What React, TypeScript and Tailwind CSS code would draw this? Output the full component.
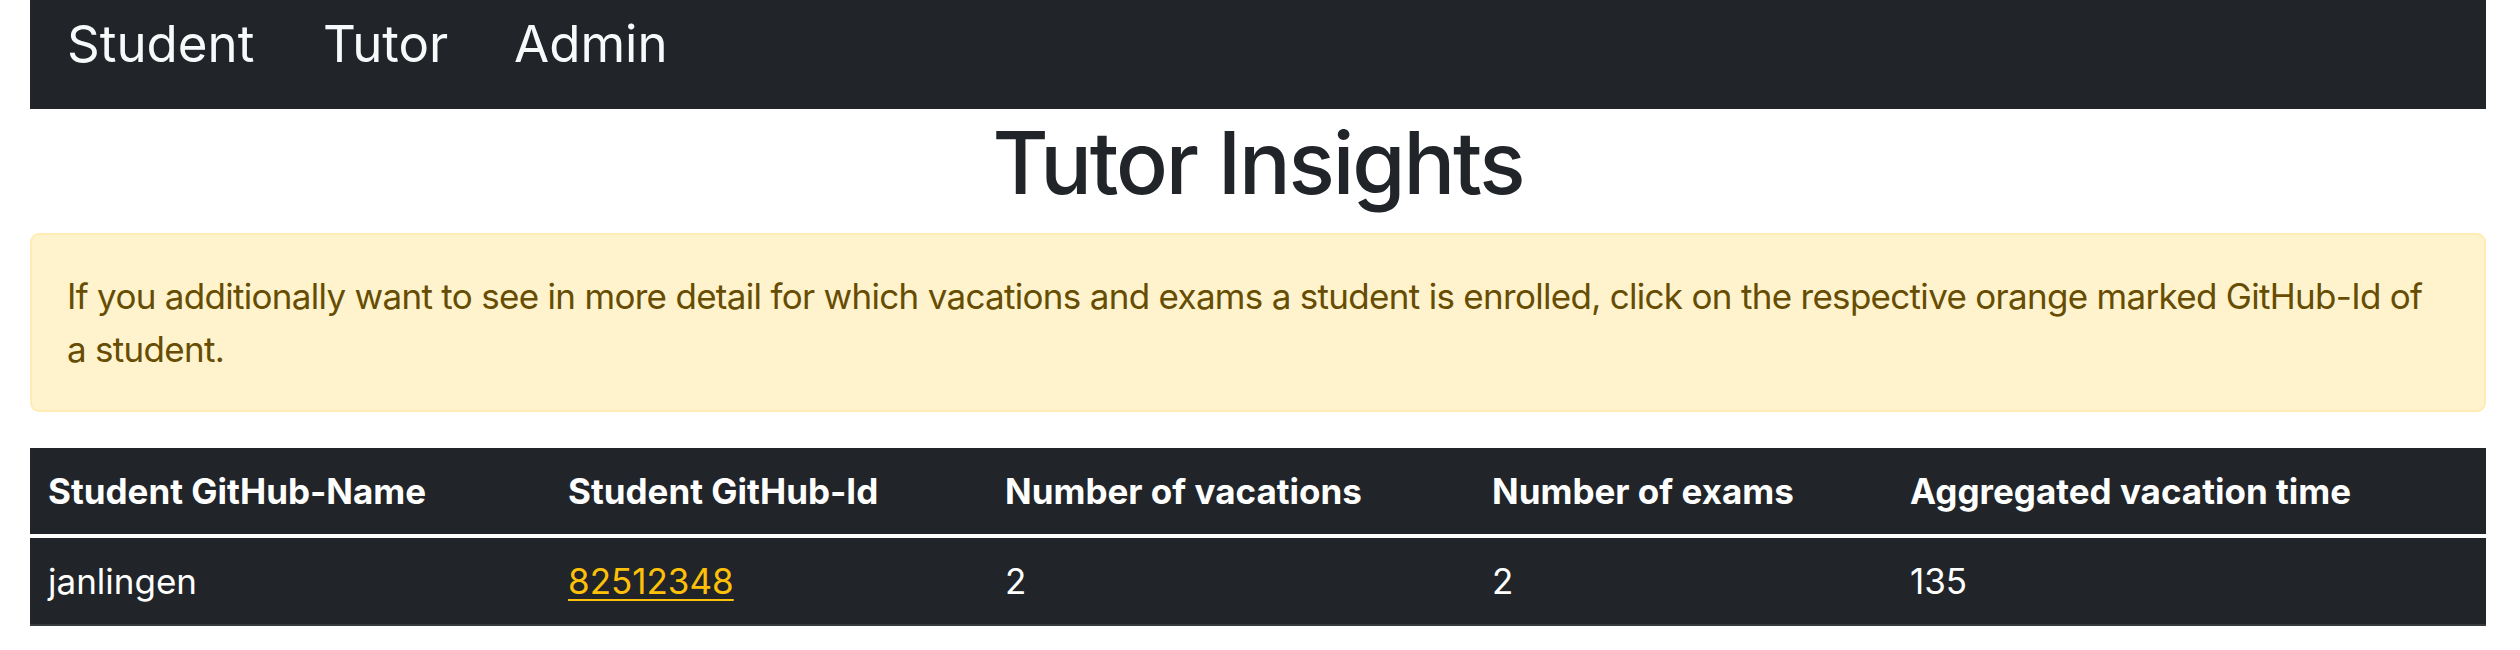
import React from "react";

const cols = [
  { label: "Student GitHub-Name", w: "w-[520px]" },
  { label: "Student GitHub-Id", w: "w-[437px]" },
  { label: "Number of vacations", w: "w-[487px]" },
  { label: "Number of exams", w: "w-[418px]" },
  { label: "Aggregated vacation time", w: "w-[594px]" },
];

export default function App() {
  return (
    <div className="[font-family:Inter,'Noto_Sans',sans-serif] bg-white min-h-[650px] text-[#212529]">
      <div className="ml-[30px] mr-[34px]">
        <nav className="h-[109px] bg-[#212529] pl-[37px]">
          <ul className="flex pt-[13px] text-[51px] leading-[1.21] text-[#f8f9fa]">
            <li className="w-[256px]">
              <a href="#">Student</a>
            </li>
            <li className="w-[191px]">
              <a href="#">Tutor</a>
            </li>
            <li>
              <a href="#">Admin</a>
            </li>
          </ul>
        </nav>

        <h1 className="mt-[3px] mb-[18px] text-center text-[86px] leading-[1.2] font-medium tracking-[-0.025em] text-[#212529]">
          Tutor Insights
        </h1>

        <div className="rounded-[9px] border-2 border-[#ffecb5] bg-[#fff3cd] px-[35px] py-[35px] text-[35px] leading-[52.5px] tracking-[-0.02em] text-[#664d03]">
          If you additionally want to see in more detail for which vacations and exams a student is enrolled, click on the respective orange marked GitHub-Id of a student.
        </div>

        <table className="mt-[36px] w-full table-fixed border-collapse bg-[#212529] text-[35px] leading-[52px] text-white">
          <thead>
            <tr>
              {cols.map((c) => (
                <th
                  key={c.label}
                  className={`${c.w} border-b-2 border-[#373b3e] px-[18px] py-[17px] text-left font-bold`}
                >
                  {c.label}
                </th>
              ))}
            </tr>
          </thead>
          <tbody className="border-t-4 border-white">
            <tr>
              <td className="border-b-2 border-[#373b3e] px-[18px] py-[17px]">janlingen</td>
              <td className="border-b-2 border-[#373b3e] px-[18px] py-[17px]">
                <a href="#" className="text-[#ffc107] underline decoration-2 underline-offset-[5px]">
                  82512348
                </a>
              </td>
              <td className="border-b-2 border-[#373b3e] px-[18px] py-[17px]">2</td>
              <td className="border-b-2 border-[#373b3e] px-[18px] py-[17px]">2</td>
              <td className="border-b-2 border-[#373b3e] px-[18px] py-[17px]">135</td>
            </tr>
          </tbody>
        </table>
      </div>
    </div>
  );
}
